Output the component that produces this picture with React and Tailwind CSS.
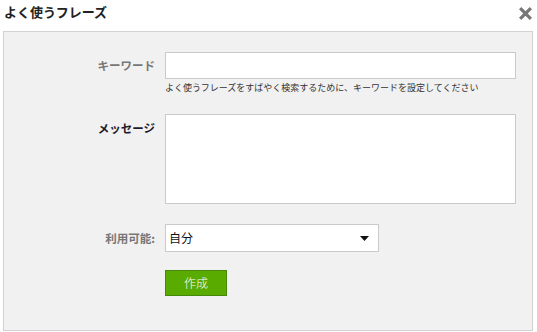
import React, { useState } from "react";

const font = { fontFamily: '"Noto Sans CJK JP", "Noto Sans", sans-serif' };

const App = () => {
	const [keyword, setKeyword] = useState("");
	const [message, setMessage] = useState("");
	const [scope, setScope] = useState("自分");

	return (
		<div className="w-[537px] h-[332px] bg-white text-[#222]" style={font}>
			{/* Header */}
			<div className="h-[31px] flex items-start justify-between pl-[4px] pr-[4px] pt-[2px]">
				<h2 className="text-[13px] font-bold leading-[20px] text-[#222]">よく使うフレーズ</h2>
				<button className="mt-[3px] w-[16px] h-[16px] flex items-center justify-center">
					<svg width="15" height="15" viewBox="0 0 14 14">
						<path d="M2 2 L12 12 M12 2 L2 12" stroke="#777" strokeWidth="3" />
					</svg>
				</button>
			</div>

			{/* Panel */}
			<div className="ml-[3px] w-[530px] h-[300px] bg-[#f1f1f1] border border-[#d2d2d2] pt-[20px]">
				{/* Keyword */}
				<div className="flex">
					<label className="w-[151px] text-right text-[11.5px] font-bold text-[#777] leading-[14px] pt-[6px]">
						キーワード
					</label>
					<div className="ml-[10px]">
						<input
							type="text"
							value={keyword}
							onChange={(e) => setKeyword(e.target.value)}
							className="block w-[351px] h-[27px] bg-white border border-[#cacaca] outline-none px-1 text-[12px]"
						/>
						<p className="mt-[3px] text-[9px] leading-[12px] text-[#333] whitespace-nowrap">
							よく使うフレーズをすばやく検索するために、キーワードを設定してください
						</p>
					</div>
				</div>

				{/* Message */}
				<div className="flex mt-[20px]">
					<label className="w-[151px] text-right text-[11.5px] font-bold text-[#1e1a2a] leading-[14px] pt-[7px]">
						メッセージ
					</label>
					<textarea
						value={message}
						onChange={(e) => setMessage(e.target.value)}
						className="ml-[10px] block w-[351px] h-[90px] bg-white border border-[#cacaca] outline-none resize-none p-1 text-[12px]"
					/>
				</div>

				{/* Availability */}
				<div className="flex items-center mt-[20px]">
					<label className="w-[151px] text-right text-[11.5px] font-bold text-[#777] leading-[14px]">
						利用可能:
					</label>
					<div className="ml-[10px] relative w-[214px] h-[28px] bg-white border border-[#cacaca] flex items-center pl-[3px] text-[12px] text-[#111]">
						<span>{scope}</span>
						<svg className="absolute right-[9px] top-[11px]" width="9" height="5" viewBox="0 0 9 5">
							<path d="M0 0 H9 L4.5 5 Z" fill="#111" />
						</svg>
					</div>
				</div>

				{/* Submit */}
				<div className="ml-[161px] mt-[17px]">
					<button
						onClick={() => setScope("自分")}
						className="w-[62px] h-[26px] bg-[#5aab00] border border-[#46880a] text-white text-[12px] font-light leading-[24px]">
						作成
					</button>
				</div>
			</div>
		</div>
	);
};

export default App;
